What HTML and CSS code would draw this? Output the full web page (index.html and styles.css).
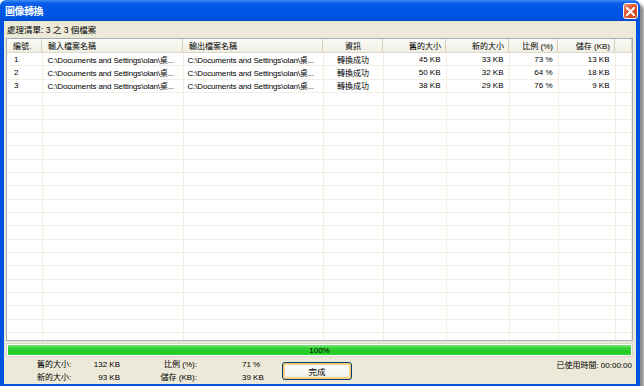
FILE: index.html
```html
<!DOCTYPE html>
<html lang="zh-Hant">

<head>
    <meta charset="UTF-8">
    <meta name="viewport" content="width=device-width, initial-scale=1.0">
    <title>圖像轉換</title>
    <link rel="stylesheet" href="styles.css">
</head>

<body>
    <div class="window">
        <div class="titlebar">
            <span class="title">圖像轉換</span>
            <span class="close">
                <svg width="11" height="11" viewBox="0 0 11 11">
                    <path d="M2 2 L9 9 M9 2 L2 9" stroke="#fff" stroke-width="2" stroke-linecap="square" />
                </svg>
            </span>
        </div>
        <div class="client">
            <div class="summary">處理清單: 3 之 3 個檔案</div>
            <div class="listview">
                <table class="grid">
                    <colgroup>
                        <col style="width:35px">
                        <col style="width:141px">
                        <col style="width:140px">
                        <col style="width:60px">
                        <col style="width:63px">
                        <col style="width:63px">
                        <col style="width:49px">
                        <col style="width:57px">
                        <col>
                    </colgroup>
                    <thead>
                        <tr>
                            <th class="num">編號.</th>
                            <th>輸入檔案名稱</th>
                            <th>輸出檔案名稱</th>
                            <th class="center">資訊</th>
                            <th class="right">舊的大小</th>
                            <th class="right">新的大小</th>
                            <th class="right">比例 (%)</th>
                            <th class="right">儲存 (KB)</th>
                            <th></th>
                        </tr>
                    </thead>
                    <tbody id="rows">
                    </tbody>
                </table>
            </div>
            <div class="progress">
                <div class="bar"></div>
                <span class="percent">100%</span>
            </div>
            <div class="stats">
                <div class="labels">
                    <div>舊的大小:</div>
                    <div>新的大小:</div>
                </div>
                <div class="values">
                    <div>132 KB</div>
                    <div>93 KB</div>
                </div>
                <div class="labels2">
                    <div>比例 (%):</div>
                    <div>儲存 (KB):</div>
                </div>
                <div class="values2">
                    <div>71 %</div>
                    <div>39 KB</div>
                </div>
                <button class="done">完成</button>
                <div class="elapsed">已使用時間: 00:00:00</div>
            </div>
        </div>
    </div>

    <script>
        let rows = document.getElementById('rows')
        let path = 'C:\\Documents and Settings\\olan\\桌...'

        let files = [
            { id: 1, info: '轉換成功', oldSize: '45 KB', newSize: '33 KB', ratio: '73 %', saved: '13 KB' },
            { id: 2, info: '轉換成功', oldSize: '50 KB', newSize: '32 KB', ratio: '64 %', saved: '18 KB' },
            { id: 3, info: '轉換成功', oldSize: '38 KB', newSize: '29 KB', ratio: '76 %', saved: '9 KB' }
        ]

        let str = files.map((data) => {
            return `<tr>
                <td class="num">${data.id}</td>
                <td class="path">${path}</td>
                <td class="path out">${path}</td>
                <td class="center">${data.info}</td>
                <td class="right">${data.oldSize}</td>
                <td class="right">${data.newSize}</td>
                <td class="right">${data.ratio}</td>
                <td class="right">${data.saved}</td>
                <td></td>
            </tr>`
        }).join('')

        for (let i = files.length; i < 23; i++) {
            str += '<tr>' + '<td></td>'.repeat(9) + '</tr>'
        }
        rows.innerHTML = str
    </script>
</body>

</html>
```

FILE: styles.css
```css
body {
    margin: 0;
    background-color: #fff;
    font-family: "Liberation Sans", "Noto Sans CJK TC", sans-serif;
    font-size: 8px;
    color: #000;
}

.window {
    width: 640px;
    height: 386px;
    display: flex;
    flex-direction: column;
    box-shadow: 4px 4px 3px rgba(0, 0, 0, 0.45);
    border-radius: 6px 6px 0 0;
    overflow: hidden;
}

.titlebar {
    height: 21px;
    flex-shrink: 0;
    display: flex;
    align-items: center;
    justify-content: space-between;
    padding: 0 2px 0 5px;
    background: linear-gradient(#3c8ef6 0, #0a5fea 3px, #0057e6 40%, #0053e0 85%, #0047cc 100%);
}

.title {
    color: #fff;
    font-family: "Noto Sans CJK TC", sans-serif;
    font-size: 10px;
    font-weight: bold;
    letter-spacing: -0.5px;
}

.close {
    width: 13px;
    height: 14px;
    margin-top: 1px;
    border: 1px solid #fff;
    border-radius: 3px;
    background: linear-gradient(135deg, #f08f6f 0, #e2522b 45%, #c9401c 100%);
    display: flex;
    align-items: center;
    justify-content: center;
}

.client {
    flex: 1;
    display: flex;
    flex-direction: column;
    background-color: #ece9d8;
    border: 4px solid #0053e0;
    border-top: none;
    padding: 0 3px 0 2px;
}

.summary {
    height: 17px;
    line-height: 18px;
    padding-left: 1px;
    font-size: 8.5px;
}

.listview {
    height: 301px;
    border: 1px solid #a5acb5;
    background-color: #fff;
    overflow: hidden;
}

.grid {
    width: 100%;
    table-layout: fixed;
    border-collapse: collapse;
}

.grid th {
    height: 13px;
    font-weight: normal;
    text-align: left;
    padding: 0 0 0 6px;
    background: linear-gradient(#fbfbf8, #f1efe4);
    border-bottom: 1px solid #dcd9c8;
    box-shadow: inset -1px 0 0 #d3cfbd;
    white-space: nowrap;
    overflow: hidden;
}

.grid td {
    height: 12.33px;
    padding: 0 0 0 5px;
    border-right: 1px solid #f1efe4;
    border-bottom: 1px solid #f1efe4;
    white-space: nowrap;
    overflow: hidden;
}

.grid td.num {
    padding-left: 7px;
}

.grid td.path {
    letter-spacing: -0.15px;
}

.grid td.out {
    padding-left: 4px;
}

.grid .center {
    text-align: center;
    padding: 0;
}

.grid .right {
    text-align: right;
    padding: 0 5px 0 0;
}

.progress {
    position: relative;
    height: 12px;
    margin-top: 2px;
    border: 1px solid #d8d6cb;
    background-color: #fff;
    display: flex;
    align-items: center;
    justify-content: center;
}

.bar {
    position: absolute;
    inset: 1px;
    background: linear-gradient(#7de87d 0, #36d236 30%, #22c922 70%, #2ed42e 100%);
}

.percent {
    position: relative;
    font-size: 8px;
}

.stats {
    flex: 1;
    display: flex;
    align-items: flex-start;
}

.stats div div {
    height: 13px;
    line-height: 13px;
}

.labels {
    margin-left: 31px;
    width: 40px;
    margin-top: 1px;
}

.values {
    width: 43px;
    text-align: right;
    margin-top: 1px;
}

.labels2 {
    width: 77px;
    text-align: right;
    margin-top: 1px;
}

.values2 {
    width: 34px;
    margin-left: 45px;
    margin-top: 1px;
}

.done {
    margin: 5px 0 0 6px;
    width: 70px;
    height: 18px;
    padding: 0;
    font-family: "Noto Sans CJK TC", sans-serif;
    font-size: 8.5px;
    border: 1px solid #003c74;
    border-radius: 3px;
    background: linear-gradient(#fffffd, #f4f3ee 80%, #dcd8c8);
    box-shadow: inset 0 0 0 1px #f8c86a, inset 0 0 0 2px #fbd890;
}

.elapsed {
    flex: 1;
    text-align: right;
    padding-right: 1px;
    margin-top: 2px;
    height: 13px;
    line-height: 13px;
}
```
